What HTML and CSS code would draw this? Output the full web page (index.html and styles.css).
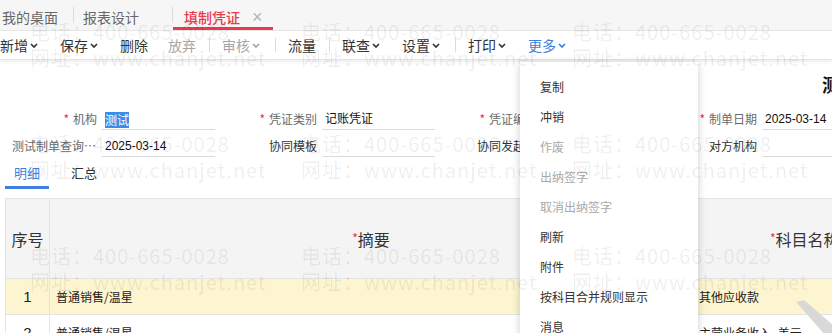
FILE: index.html
```html
<!DOCTYPE html>
<html lang="zh-CN">
<head>
<meta charset="utf-8">
<title>填制凭证</title>
<link rel="stylesheet" href="styles.css">
</head>
<body>
<div class="app">
  <div class="tabbar">
    <div class="tab tab-first">我的桌面</div>
    <span class="tab-sep"></span>
    <div class="tab tab-second">报表设计</div>
    <span class="tab-sep"></span>
    <div class="tab tab-active">填制凭证<span class="tab-close">×</span></div>
  </div>

  <div class="toolbar">
    <div class="tb-item first">新增<svg class="chev" viewBox="0 0 8 5"><polyline points="1,1 4,4 7,1"/></svg></div>
    <div class="tb-item">保存<svg class="chev" viewBox="0 0 8 5"><polyline points="1,1 4,4 7,1"/></svg></div>
    <div class="tb-item">删除</div>
    <div class="tb-item dis">放弃</div>
    <span class="tb-sep"></span>
    <div class="tb-item dis">审核<svg class="chev" viewBox="0 0 8 5"><polyline points="1,1 4,4 7,1"/></svg></div>
    <span class="tb-sep"></span>
    <div class="tb-item">流量</div>
    <span class="tb-sep"></span>
    <div class="tb-item">联查<svg class="chev" viewBox="0 0 8 5"><polyline points="1,1 4,4 7,1"/></svg></div>
    <div class="tb-item">设置<svg class="chev" viewBox="0 0 8 5"><polyline points="1,1 4,4 7,1"/></svg></div>
    <span class="tb-sep"></span>
    <div class="tb-item">打印<svg class="chev" viewBox="0 0 8 5"><polyline points="1,1 4,4 7,1"/></svg></div>
    <div class="tb-item more">更多<svg class="chev" viewBox="0 0 8 5"><polyline points="1,1 4,4 7,1"/></svg></div>
  </div>

  <div class="content">
    <div class="title">测试凭证</div>

    <div class="form">
      <div class="field"><div class="lbl req">机构</div><div class="inp"><span class="sel">测试</span></div></div>
      <div class="field"><div class="lbl req">凭证类别</div><div class="inp">记账凭证</div></div>
      <div class="field"><div class="lbl req">凭证编号</div><div class="inp">0001</div></div>
      <div class="field"><div class="lbl req">制单日期</div><div class="inp">2025-03-14</div></div>

      <div class="field"><div class="lbl">测试制单查询日期</div><div class="inp">2025-03-14</div></div>
      <div class="field"><div class="lbl dark">协同模板</div><div class="inp"></div></div>
      <div class="field"><div class="lbl dark">协同发起方</div><div class="inp"></div></div>
      <div class="field"><div class="lbl dark">对方机构</div><div class="inp"></div></div>
    </div>

    <div class="subtabs">
      <div class="subtab active">明细</div>
      <div class="subtab">汇总</div>
    </div>

    <table class="grid">
      <colgroup>
        <col class="c-no">
        <col class="c-desc">
        <col class="c-acct">
      </colgroup>
      <thead>
        <tr>
          <th>序号</th>
          <th><span class="star">*</span>摘要</th>
          <th><span class="star">*</span>科目名称</th>
        </tr>
      </thead>
      <tbody>
        <tr class="hl">
          <td class="no">1</td>
          <td>普通销售/温星</td>
          <td>其他应收款</td>
        </tr>
        <tr>
          <td class="no">2</td>
          <td>普通销售/温星</td>
          <td>主营业务收入_美元</td>
        </tr>
      </tbody>
    </table>
  </div>

  <svg class="stamp" viewBox="0 0 42 33"><polygon points="6,2 14,0 44,26 44,36 36,36"/></svg>

  <div class="dropdown">
    <div class="dd-item">复制</div>
    <div class="dd-item">冲销</div>
    <div class="dd-item dis">作废</div>
    <div class="dd-item dis">出纳签字</div>
    <div class="dd-item dis">取消出纳签字</div>
    <div class="dd-item">刷新</div>
    <div class="dd-item">附件</div>
    <div class="dd-item">按科目合并规则显示</div>
    <div class="dd-item">消息</div>
  </div>

  <div class="watermark">
    <div class="wm"><div>电话：400-665-0028</div><div>网址：www.chanjet.net</div></div>
    <div class="wm"><div>电话：400-665-0028</div><div>网址：www.chanjet.net</div></div>
    <div class="wm"><div>电话：400-665-0028</div><div>网址：www.chanjet.net</div></div>
    <div class="wm"><div>电话：400-665-0028</div><div>网址：www.chanjet.net</div></div>
    <div class="wm"><div>电话：400-665-0028</div><div>网址：www.chanjet.net</div></div>
    <div class="wm"><div>电话：400-665-0028</div><div>网址：www.chanjet.net</div></div>
    <div class="wm"><div>电话：400-665-0028</div><div>网址：www.chanjet.net</div></div>
    <div class="wm"><div>电话：400-665-0028</div><div>网址：www.chanjet.net</div></div>
    <div class="wm"><div>电话：400-665-0028</div><div>网址：www.chanjet.net</div></div>
    <div class="wm"><div>电话：400-665-0028</div><div>网址：www.chanjet.net</div></div>
    <div class="wm"><div>电话：400-665-0028</div><div>网址：www.chanjet.net</div></div>
    <div class="wm"><div>电话：400-665-0028</div><div>网址：www.chanjet.net</div></div>
  </div>
</div>
</body>
</html>
```

FILE: styles.css
```css
* { box-sizing: border-box; }
html, body { margin: 0; padding: 0; }
body {
  width: 832px;
  height: 333px;
  overflow: hidden;
  background: #fff;
  color: #333;
  font-family: "Liberation Sans", "Noto Sans CJK SC", sans-serif;
  font-size: 12px;
}
.app {
  position: relative;
  width: 832px;
  height: 333px;
  overflow: hidden;
}

/* ---------- top tabs ---------- */
.tabbar {
  display: flex;
  align-items: center;
  height: 31px;
  background: #f6f6f6;
  border-bottom: 1px solid #e6e6e6;
  font-family: "Noto Sans CJK SC", sans-serif;
  font-size: 14px;
}
.tab {
  display: flex;
  align-items: center;
  height: 30px;
  padding-top: 3px;
  line-height: 20px;
  color: #666;
  white-space: nowrap;
}
.tab-first { width: 73px; padding-left: 2px; }
.tab-second { width: 98px; padding-left: 9px; }
.tab-active {
  width: 100px;
  padding-left: 11px;
  padding-top: 6px;
  color: #e8394d;
  font-weight: 500;
  border-bottom: 3px solid #e8394d;
}
.tab-sep {
  width: 1px;
  height: 16px;
  background: #dcdcdc;
}
.tab-close {
  margin-left: 12px;
  color: #b3b3b3;
  font-family: "Liberation Sans", sans-serif;
  font-size: 18px;
  font-weight: normal;
}

/* ---------- toolbar ---------- */
.toolbar {
  position: relative;
  z-index: 1;
  display: flex;
  align-items: center;
  height: 29px;
  background: #fff;
  border-bottom: 1px solid #e4e4e4;
  box-shadow: 0 2px 3px rgba(0, 0, 0, 0.07);
  font-family: "Noto Sans CJK SC", sans-serif;
  font-size: 14px;
  color: #333;
}
.tb-item {
  display: flex;
  align-items: center;
  padding: 0 10px;
  line-height: 20px;
  white-space: nowrap;
}
.tb-item.first { padding-left: 0; }
.tb-item.dis { color: #a6a6a6; }
.tb-item.more { color: #3b80de; }
.chev {
  width: 8px;
  height: 5px;
  margin: 1px 2px 0 2px;
  fill: none;
  stroke: currentColor;
  stroke-width: 1.7;
}
.tb-item.dis .chev { stroke: #a6a6a6; }
.tb-sep {
  width: 1px;
  height: 14px;
  background: #dcdcdc;
  margin: 0 2px 0 3px;
}

/* ---------- content ---------- */
.content {
  padding-top: 12px;
}
.title {
  padding-left: 822px;
  font-family: "Noto Sans CJK SC", sans-serif;
  font-size: 18px;
  font-weight: bold;
  line-height: 24px;
  color: #111;
  white-space: nowrap;
}

.form {
  display: grid;
  grid-template-columns: repeat(4, 220px);
  width: 900px;
  margin-top: 7px;
  padding-left: 12px;
}
.field {
  display: flex;
}
.lbl {
  width: 85px;
  padding-top: 6px;
  line-height: 20px;
  text-align: right;
  white-space: nowrap;
  overflow: hidden;
  text-overflow: ellipsis;
  color: #6a6a6a;
  font-family: "Noto Sans CJK SC", sans-serif;
  font-size: 12px;
}
.lbl.dark { color: #333; }
.lbl.req::before {
  content: "*";
  color: #e5332f;
  margin-right: 4px;
}
.inp {
  width: 113px;
  margin-left: 5px;
  padding: 6px 0 0 3px;
  line-height: 20px;
  border-bottom: 1px solid #dadada;
  color: #111;
  font-size: 12px;
  white-space: nowrap;
}
.sel {
  display: inline-block;
  line-height: 16px;
  vertical-align: middle;
  background: #3a8ee8;
  color: #fff;
  font-family: "Noto Sans CJK SC", sans-serif;
}

.subtabs {
  display: flex;
  margin-top: 6px;
  padding-left: 5px;
  font-family: "Noto Sans CJK SC", sans-serif;
  font-size: 13px;
}
.subtab {
  padding: 0 9px 3px 9px;
  line-height: 20px;
  border-bottom: 3px solid transparent;
  color: #333;
}
.subtab + .subtab { margin-left: 13px; }
.subtab.active {
  color: #3b7fe0;
  border-bottom-color: #3b7fe0;
}

.grid {
  margin: 9px 0 0 5px;
  border-collapse: collapse;
  table-layout: fixed;
  width: 1087px;
  font-family: "Noto Sans CJK SC", sans-serif;
}
.c-no { width: 44px; }
.c-desc { width: 643px; }
.c-acct { width: 400px; }
.grid th,
.grid td {
  border: 1px solid #e4e4e4;
}
.grid thead tr {
  height: 80px;
  background: #f4f4f4;
}
.grid th {
  font-weight: normal;
  font-size: 16px;
  color: #333;
  text-align: center;
  white-space: nowrap;
}
.grid th:last-child {
  text-align: left;
  padding-left: 77px;
}
.star {
  color: #e5332f;
  font-size: 12px;
  vertical-align: 3px;
}
.grid tbody tr { height: 36px; }
.grid tbody tr.hl { background: #fdf5cf; }
.grid td {
  padding: 0 6px;
  font-size: 12px;
  color: #222;
  white-space: nowrap;
}
.grid td.no {
  text-align: center;
  font-family: "Liberation Sans", sans-serif;
  font-size: 15px;
  padding: 0;
}

.stamp {
  position: absolute;
  left: 790px;
  top: 300px;
  width: 42px;
  height: 33px;
  fill: #d8d8d8;
}

/* ---------- dropdown menu ---------- */
.dropdown {
  position: absolute;
  left: 520px;
  top: 62px;
  z-index: 5;
  width: 178px;
  height: 290px;
  padding: 10px 0 0 20px;
  background: #fff;
  box-shadow: 0 2px 8px rgba(0, 0, 0, 0.2);
  font-family: "Noto Sans CJK SC", sans-serif;
  font-size: 12px;
}
.dd-item {
  height: 30px;
  line-height: 30px;
  color: #333;
  white-space: nowrap;
}
.dd-item.dis { color: #a8a8a8; }

/* ---------- watermark ---------- */
.watermark {
  position: absolute;
  left: 30px;
  top: 19px;
  z-index: 10;
  display: grid;
  grid-template-columns: repeat(4, 271px);
  grid-auto-rows: 112px;
  pointer-events: none;
  color: rgba(0, 0, 0, 0.075);
  font-family: "Noto Sans CJK SC", sans-serif;
  font-size: 20px;
  line-height: 26px;
  letter-spacing: 1px;
  white-space: nowrap;
}
```
